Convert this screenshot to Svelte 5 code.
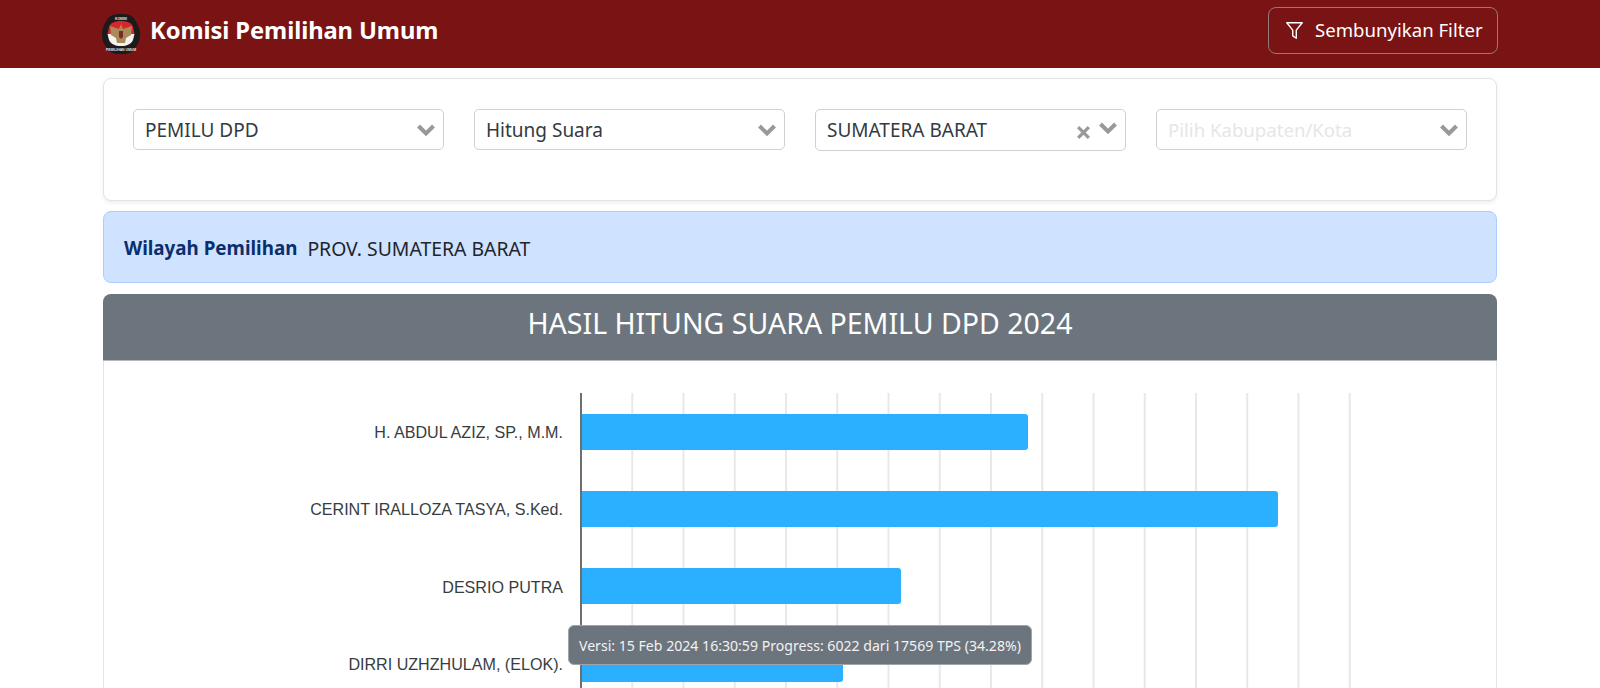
<script>
    const filters = [
        { value: "PEMILU DPD" },
        { value: "Hitung Suara" },
        { value: "SUMATERA BARAT", clearable: true },
        { placeholder: "Pilih Kabupaten/Kota" }
    ];

    const candidates = [
        { name: "H. ABDUL AZIZ, SP., M.M.", width: 446 },
        { name: "CERINT IRALLOZA TASYA, S.Ked.", width: 696 },
        { name: "DESRIO PUTRA", width: 319 },
        { name: "DIRRI UZHZHULAM, (ELOK).", width: 261 }
    ];
</script>

<nav class="navbar">
    <div class="container nav-inner">
        <div class="brand">
            <svg class="logo" viewBox="0 0 38 40" aria-hidden="true">
                <path d="M19 0 C27 0 31 2 33 6 C37 12 38 16 38 20 C38 25 37 29 33 34 C31 38 27 40 19 40 C11 40 7 38 5 34 C1 29 0 25 0 20 C0 16 1 12 5 6 C7 2 11 0 19 0 Z" fill="#1c1a1a"/>
                <path d="M19 7 C25 7 30 9 31 13 L32.5 20 L5.5 20 L7 13 C8 9 13 7 19 7 Z" fill="#d8262a"/>
                <path d="M5.5 20 L32.5 20 L31 26 C29 30 25 32 19 32 C13 32 9 30 7 26 Z" fill="#f6f3ee"/>
                <path d="M19 10 L21 15 L30 12 L29 21 L24 24 L23 29 L15 29 L14 24 L9 21 L8 12 L17 15 Z" fill="#a98a5a"/>
                <path d="M17 17h4v6l-2 2-2-2z" fill="#7a2a20"/>
                <text x="19" y="5.5" class="logo-text" text-anchor="middle">KOMISI</text>
                <text x="19" y="37" class="logo-text" text-anchor="middle">PEMILIHAN UMUM</text>
            </svg>
            <span class="brand-name">Komisi Pemilihan Umum</span>
        </div>
        <button class="toggle" type="button">
            <svg class="funnel" viewBox="0 0 16 16" aria-hidden="true">
                <path d="M1.5 1.5h13l-5 6.2v6.8l-3-2v-4.8z" fill="none" stroke="#fff" stroke-width="1.2" stroke-linejoin="round"/>
            </svg>
            Sembunyikan Filter
        </button>
    </div>
</nav>

<main class="container">
    <section class="filter-card">
        {#each filters as f}
            <div class="select" class:tall={f.clearable}>
                <span class="select-text" class:placeholder={!f.value}>{f.value ?? f.placeholder}</span>
                {#if f.clearable}
                    <svg class="clear" viewBox="0 0 14 14" aria-hidden="true">
                        <path d="M2 2l10 10M12 2l-10 10" stroke="#999" stroke-width="3" fill="none"/>
                    </svg>
                {/if}
                <svg class="chevron" class:raised={f.clearable} viewBox="0 0 20 14" aria-hidden="true">
                    <path d="M2.5 3l7.5 7.5L17.5 3" stroke="#999" stroke-width="4" fill="none"/>
                </svg>
            </div>
        {/each}
    </section>

    <section class="alert">
        <strong>Wilayah Pemilihan</strong>
        <span>PROV. SUMATERA BARAT</span>
    </section>

    <section class="result-card">
        <header class="result-head">HASIL HITUNG SUARA PEMILU DPD 2024</header>
        <div class="chart">
            {#each candidates as c}
                <div class="row">
                    <div class="label">{c.name}</div>
                    <div class="plot">
                        <div class="bar" style="width: {c.width}px"></div>
                    </div>
                </div>
            {/each}
            <div class="tooltip">Versi: 15 Feb 2024 16:30:59 Progress: 6022 dari 17569 TPS (34.28%)</div>
        </div>
    </section>
</main>

<style>
    :global(html), :global(body) {
        overflow: hidden;
        height: 688px;
    }
    :global(body) {
        font-family: "Noto Sans", "Open Sans", sans-serif;
        color: #212529;
        background: #fff;
    }
    .container {
        width: 1394px;
        margin: 0 auto;
    }
    .navbar {
        background: #7a1313;
        height: 68px;
    }
    .nav-inner {
        display: flex;
        justify-content: space-between;
        align-items: center;
        height: 100%;
    }
    .brand {
        display: flex;
        align-items: center;
        gap: 10px;
        margin-top: -4px;
    }
    .logo {
        width: 38px;
        height: 40px;
        margin-left: -1px;
        margin-top: 4px;
    }
    .logo-text {
        fill: #e6e6e6;
        font-family: "Liberation Sans", Arial, sans-serif;
        font-size: 3.4px;
        font-weight: 700;
    }
    .brand-name {
        color: #fff;
        font-size: 23.75px;
        font-weight: 700;
        letter-spacing: -0.1px;
        margin-top: -5px;
    }
    .toggle {
        display: flex;
        align-items: center;
        gap: 11px;
        height: 47px;
        width: 230px;
        margin-top: -7px;
        margin-right: -1px;
        padding: 0 0 0 16px;
        background: transparent;
        border: 1px solid #947a7c;
        border-radius: 8px;
        color: #fff;
        font-family: inherit;
        font-size: 18.6px;
        line-height: 1;
    }
    .funnel {
        width: 19px;
        height: 19px;
    }
    .filter-card {
        display: grid;
        grid-template-columns: repeat(4, 1fr);
        column-gap: 30px;
        height: 123px;
        box-sizing: border-box;
        margin-top: 10px;
        padding: 30px 29px 0 29px;
        background: #fff;
        border: 1px solid #e3e3e3;
        border-radius: 8px;
        box-shadow: 0 2px 4px rgba(0, 0, 0, 0.07);
    }
    .select {
        display: flex;
        align-items: center;
        height: 41px;
        box-sizing: border-box;
        padding: 0 7px 0 11px;
        border: 1px solid #d0d0d0;
        border-radius: 5px;
    }
    .select.tall {
        height: 42px;
    }
    .select-text {
        flex: 1;
        font-size: 19px;
        color: #333a42;
    }
    .select-text.placeholder {
        color: #e6e6e6;
        font-size: 18.6px;
    }
    .clear {
        width: 15px;
        height: 15px;
        margin: 4px 7px 0 0;
    }
    .chevron {
        width: 20px;
        height: 14px;
    }
    .chevron.raised {
        margin-top: -5px;
    }
    .alert {
        display: flex;
        align-items: center;
        gap: 10px;
        height: 72px;
        box-sizing: border-box;
        margin-top: 10px;
        padding: 2px 20px 0;
        background: #cfe2ff;
        border: 1px solid #a9cdff;
        border-radius: 8px;
        font-size: 19.4px;
        color: #212529;
    }
    .alert strong {
        color: #0a2f6c;
        font-weight: 700;
        font-size: 18.8px;
    }
    .result-card {
        margin-top: 11px;
        height: 500px;
        border: 1px solid #e3e3e3;
        border-radius: 8px;
    }
    .result-head {
        height: 67px;
        margin: -1px -1px 0;
        line-height: 58px;
        text-align: center;
        color: #fff;
        font-size: 28.5px;
        background: #6c757d;
        border-radius: 8px 8px 0 0;
        border-bottom: 1px solid #b4b8bc;
        box-sizing: border-box;
    }
    .chart {
        position: relative;
        padding-top: 32px;
    }
    .row {
        display: flex;
        height: 77.3px;
    }
    .label {
        width: 459px;
        padding-top: 31px;
        box-sizing: border-box;
        text-align: right;
        font-family: "Liberation Sans", Arial, sans-serif;
        font-size: 16.1px;
        line-height: 17px;
        color: #373d3f;
        white-space: nowrap;
    }
    .plot {
        display: flex;
        align-items: center;
        width: 771px;
        margin-left: 17px;
        border-left: 2px solid #6e6e6e;
        box-sizing: border-box;
        background-image: linear-gradient(to right, #e8e8e8 1.5px, transparent 1.5px);
        background-size: 51.25px 100%;
        background-position: -2px 0;
        background-repeat: repeat-x;
    }
    .bar {
        height: 36px;
        background: #2bafff;
        border-radius: 0 3px 3px 0;
    }
    .tooltip {
        position: absolute;
        left: 464px;
        top: 264px;
        height: 40px;
        box-sizing: border-box;
        padding: 0 10px;
        display: flex;
        align-items: center;
        background: #6c757d;
        border: 1px solid #a0a5aa;
        border-radius: 6px;
        color: #f2f2f2;
        font-size: 14.1px;
        white-space: nowrap;
    }
</style>
